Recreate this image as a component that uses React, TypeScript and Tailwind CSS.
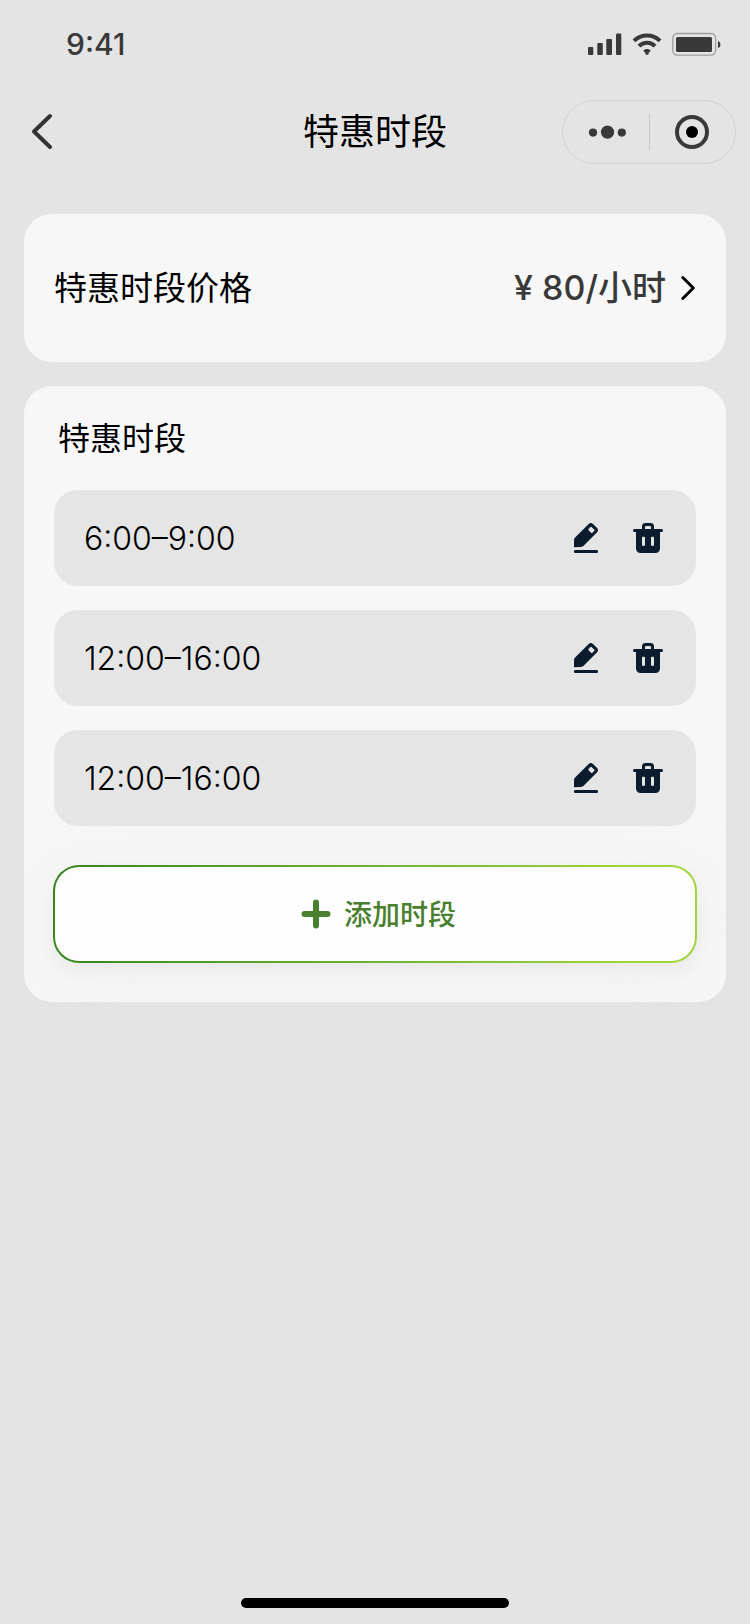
import React, { useState } from "react";

type Slot = { id: number; start: string; end: string };

const SignalIcon = () => (
    <svg width="34" height="24" viewBox="0 0 34 24" fill="#393939" aria-hidden="true">
        <rect x="0" y="15" width="5.3" height="8" rx="1" />
        <rect x="9.3" y="11" width="5.5" height="12" rx="1" />
        <rect x="18.3" y="7" width="5.7" height="16" rx="1" />
        <rect x="28" y="1.5" width="5.3" height="21.5" rx="1" />
    </svg>
);

const WifiIcon = () => (
    <svg width="30" height="24" viewBox="0 0 30 24" fill="none" stroke="#393939" strokeWidth="4" aria-hidden="true">
        <path d="M2 8.8C9.2 1.6 20.8 1.6 28 8.8" />
        <path d="M7 14.2C11.4 9.6 18.6 9.6 23 14.2" />
        <path d="M11.2 18.7C13.3 16.3 16.7 16.3 18.8 18.7L16.6 21V22.2L15 23L13.4 22.2V21Z" fill="#393939" stroke="none" />
    </svg>
);

const BatteryIcon = () => (
    <svg width="50" height="24" viewBox="0 0 50 24" fill="none" aria-hidden="true">
        <rect x="0.8" y="1.5" width="42.8" height="21.6" rx="4.5" stroke="#9d9d9d" strokeWidth="1.3" />
        <rect x="4" y="5" width="36" height="15" rx="1.5" fill="#393939" />
        <path d="M46 9C49.2 10.1 49.2 15.1 46 16.2Z" fill="#393939" />
    </svg>
);

const EditIcon = () => (
    <svg width="36" height="36" viewBox="0 0 36 36" aria-hidden="true">
        <path
            fill="#0c1c2f"
            fillRule="evenodd"
            d="M6 27.2V20.2C6 19.2 6.4 18.2 7.1 17.5L20.7 3.9C21.9 2.7 23.8 2.7 25 3.9L29.1 8C30.3 9.2 30.3 11.1 29.1 12.3L15.6 25.8C14.9 26.5 13.9 27 12.9 27ZM22.5 6.9L20.5 8.9Q20 9.4 20.4 10L23.3 12.9Q23.9 13.3 24.4 12.8L26.4 10.8Q26.8 10.3 26.4 9.8L23.5 6.9Q23 6.5 22.5 6.9Z"
        />
        <rect x="6" y="30" width="24" height="3" rx="1.2" fill="#0c1c2f" />
    </svg>
);

const TrashIcon = () => (
    <svg width="36" height="36" viewBox="0 0 36 36" aria-hidden="true">
        <path
            fill="#0c1c2f"
            fillRule="evenodd"
            d="M12 9V6.5A3.5 3.5 0 0 1 15.5 3H20.5A3.5 3.5 0 0 1 24 6.5V9H31.5A1.5 1.5 0 0 1 31.5 12H30V28.5A4.5 4.5 0 0 1 25.5 33H10.5A4.5 4.5 0 0 1 6 28.5V12H4.5A1.5 1.5 0 0 1 4.5 9ZM15 9H21V7A1 1 0 0 0 20 6H16A1 1 0 0 0 15 7ZM12 18V24.5A1.5 1.5 0 0 0 15 24.5V18A1.5 1.5 0 0 0 12 18ZM21 18V24.5A1.5 1.5 0 0 0 24 24.5V18A1.5 1.5 0 0 0 21 18Z"
        />
    </svg>
);

const StatusBar = () => (
    <div className="h-22 pl-[66px] pr-7 flex items-center justify-between">
        <span className="text-[30px] leading-9 font-medium text-[#393939]">9:41</span>
        <div className="flex items-center gap-2.5">
            <SignalIcon />
            <WifiIcon />
            <BatteryIcon />
        </div>
    </div>
);

const NavBar = () => (
    <header className="h-22 px-3.5 grid grid-cols-[1fr_auto_1fr] items-center">
        <button type="button" aria-label="返回" className="w-14 h-14 flex items-center justify-center">
            <svg width="28" height="40" viewBox="0 0 28 40" fill="none" stroke="#333333" strokeWidth="4" strokeLinecap="round" strokeLinejoin="round" aria-hidden="true">
                <path d="M22 4L6 19.5L22 35" />
            </svg>
        </button>
        <h1 className="text-4xl text-black">特惠时段</h1>
        <div className="justify-self-end w-[174px] h-16 rounded-full border border-[#d2d2d2] flex items-center">
            <button type="button" aria-label="更多" className="flex-1 h-full flex items-center justify-center">
                <svg width="40" height="14" viewBox="0 0 40 14" fill="#393939" aria-hidden="true">
                    <circle cx="7" cy="7.6" r="4.1" />
                    <circle cx="21.5" cy="7.2" r="6.6" />
                    <circle cx="35.8" cy="7.6" r="4.1" />
                </svg>
            </button>
            <div className="w-px h-9 bg-[#c4c4c4]" />
            <button type="button" aria-label="关闭" className="flex-1 h-full flex items-center justify-center">
                <svg width="34" height="34" viewBox="0 0 34 34" aria-hidden="true">
                    <circle cx="17" cy="17" r="15" fill="none" stroke="#393939" strokeWidth="4" />
                    <circle cx="17" cy="17" r="6" fill="#000" />
                </svg>
            </button>
        </div>
    </header>
);

const SlotRow = ({ slot, onDelete }: { slot: Slot; onDelete: () => void }) => (
    <li className="h-24 px-[30px] rounded-3xl bg-[#e5e5e5] flex items-center justify-between">
        <span className="pt-0.5 text-[32px] leading-10 font-[350] text-black">
            {slot.start}–{slot.end}
        </span>
        <div className="flex gap-[26px]">
            <button type="button" aria-label="编辑">
                <EditIcon />
            </button>
            <button type="button" aria-label="删除" onClick={onDelete}>
                <TrashIcon />
            </button>
        </div>
    </li>
);

const App = () => {
    const [slots, setSlots] = useState<Slot[]>([
        { id: 1, start: "6:00", end: "9:00" },
        { id: 2, start: "12:00", end: "16:00" },
        { id: 3, start: "12:00", end: "16:00" },
    ]);

    const addSlot = () => setSlots([...slots, { id: Date.now(), start: "12:00", end: "16:00" }]);
    const removeSlot = (id: number) => setSlots(slots.filter((s) => s.id !== id));

    return (
        <div className="min-h-screen flex flex-col bg-[#e4e4e4] font-['Inter','Noto_Sans_CJK_SC',sans-serif]">
            <StatusBar />
            <NavBar />

            <main className="flex-1 px-6 pt-[38px] flex flex-col gap-6">
                {/* Price */}
                <section className="h-37 px-[30px] rounded-[28px] bg-[#f7f7f7] flex items-center justify-between">
                    <h2 className="text-[33px] leading-10 text-black">特惠时段价格</h2>
                    <button type="button" className="flex items-center gap-3.5 text-[34px] leading-10 font-medium text-[#393939]">
                        ¥ 80/小时
                        <svg width="16" height="28" viewBox="0 0 16 28" fill="none" stroke="#000" strokeWidth="3" strokeLinecap="round" strokeLinejoin="round" aria-hidden="true">
                            <path d="M2.8 3.5L13.3 14L2.8 24.5" />
                        </svg>
                    </button>
                </section>

                {/* Time slots */}
                <section className="px-[30px] pt-[33px] pb-[39px] rounded-[28px] bg-[#f7f7f7]">
                    <h2 className="px-1 text-[32px] leading-10 text-black">特惠时段</h2>
                    <ul className="mt-[31px] flex flex-col gap-6">
                        {slots.map((slot) => (
                            <SlotRow key={slot.id} slot={slot} onDelete={() => removeSlot(slot.id)} />
                        ))}
                    </ul>
                    <div className="mt-[39px] -mx-px">
                        <button
                            type="button"
                            onClick={addSlot}
                            className="w-full h-[98px] rounded-[26px] border-2 border-transparent [background:linear-gradient(#fdfdfd,#fdfdfd)_padding-box,linear-gradient(90deg,#36851e,#9dd73c_90%)_border-box] shadow-[0_8px_20px_rgba(0,0,0,0.04),0_12px_60px_rgba(236,236,236,0.5)] flex items-center justify-center gap-1.5 pt-px text-[28px] leading-10 font-medium text-[#4a7f2e]"
                        >
                            <svg width="44" height="44" viewBox="0 0 44 44" fill="none" stroke="#4a7f2e" strokeWidth="6" strokeLinecap="round" aria-hidden="true">
                                <path d="M22 9.5V32.5M10.5 21H33.5" />
                            </svg>
                            添加时段
                        </button>
                    </div>
                </section>
            </main>

            <footer className="pb-4 flex justify-center">
                <div className="w-[268px] h-2.5 rounded-full bg-black" />
            </footer>
        </div>
    );
};

export default App;
